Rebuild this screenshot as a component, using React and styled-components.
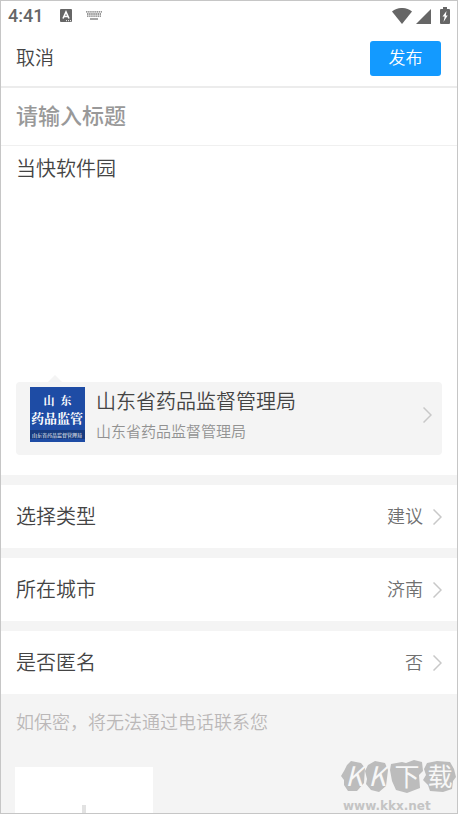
import React, { useState } from "react";
import styled, { createGlobalStyle } from "styled-components";

const GlobalStyle = createGlobalStyle`
  * {
    box-sizing: border-box;
  }
  body {
    margin: 0;
    background-color: #fff;
    font-family: Roboto, "Noto Sans CJK SC", sans-serif;
    font-weight: 350;
    color: #444;
  }
  button, input, textarea {
    font-family: inherit;
    font-weight: inherit;
    color: inherit;
    border: 0;
    outline: 0;
    padding: 0;
    background: none;
  }
`;

const Page = styled.div`
  position: relative;
  display: flex;
  flex-direction: column;
  height: 100vh;
  overflow: hidden;
  border: 1px solid #c6c6c6;
`;

const StatusBar = styled.div`
  display: flex;
  flex-shrink: 0;
  align-items: center;
  height: 29px;
  padding: 0 7px;
  color: #666;
`;

const Clock = styled.span`
  width: 52px;
  font-size: 18px;
  font-weight: 500;
  line-height: 29px;
`;

const StatusIcons = styled.div`
  display: flex;
  align-items: center;
  gap: ${(props) => props.gap};
  margin-left: ${(props) => (props.end ? "auto" : "0")};
`;

const Toolbar = styled.header`
  display: flex;
  flex-shrink: 0;
  align-items: center;
  justify-content: space-between;
  height: 58px;
  padding: 0 16px 0 15px;
  border-bottom: 2px solid #ececec;
`;

const CancelButton = styled.button`
  padding-top: 2px;
  font-size: 19px;
  line-height: 28px;
  cursor: pointer;
`;

const PublishButton = styled.button`
  width: 71px;
  height: 35px;
  border-radius: 3px;
  background-color: #139aff;
  color: #fff;
  font-size: 17px;
  line-height: 24px;
  cursor: pointer;
`;

const TitleInput = styled.input`
  flex-shrink: 0;
  height: 58px;
  padding: 0 15px;
  border-bottom: 1px solid #f0f0f0;
  font-size: 22px;
  font-weight: 500;

  &::placeholder {
    color: #999;
    opacity: 1;
  }
`;

const BodyInput = styled.textarea`
  flex-shrink: 0;
  height: 236px;
  padding: 8px 15px;
  resize: none;
  font-size: 20px;
  line-height: 30px;
`;

const AgencyCard = styled.button`
  position: relative;
  display: flex;
  flex-shrink: 0;
  align-items: center;
  height: 73px;
  margin: 0 15px 20px;
  padding: 0 10px 8px 14px;
  border-radius: 4px;
  background-color: #f4f4f4;
  text-align: left;
  cursor: pointer;

  &::before {
    content: "";
    position: absolute;
    top: -7px;
    left: 32px;
    border: 7px solid transparent;
    border-top-width: 0;
    border-bottom-color: #f4f4f4;
  }
`;

const AgencyText = styled.div`
  display: flex;
  flex: 1;
  flex-direction: column;
  gap: 4px;
  padding-left: 11px;
`;

const AgencyName = styled.span`
  font-size: 20px;
  line-height: 30px;
`;

const AgencyDetail = styled.span`
  color: #929292;
  font-size: 15px;
  line-height: 22px;
`;

const Options = styled.div`
  display: flex;
  flex-shrink: 0;
  flex-direction: column;
  gap: 10px;
  padding-top: 10px;
  background-color: #f4f4f4;
`;

const OptionRow = styled.button`
  display: flex;
  align-items: center;
  height: 63px;
  padding: 0 15px;
  background-color: #fff;
  cursor: pointer;
`;

const OptionLabel = styled.span`
  flex: 1;
  font-size: 20px;
  line-height: 30px;
  text-align: left;
`;

const OptionValue = styled.span`
  margin-right: 10px;
  color: #707070;
  font-size: 18px;
  line-height: 28px;
`;

const Footer = styled.div`
  flex: 1 0 auto;
  padding: 15px 14px;
  background-color: #f4f4f4;
`;

const Hint = styled.p`
  margin: 0 0 30px;
  padding-left: 1px;
  color: #bbb8b8;
  font-size: 18px;
  line-height: 28px;
`;

const UploadButton = styled.button`
  display: flex;
  align-items: center;
  justify-content: center;
  width: 138px;
  height: 138px;
  background-color: #fff;
  cursor: pointer;
`;

const Watermark = styled.div`
  position: absolute;
  right: 0;
  bottom: 0;
  pointer-events: none;

  svg {
    display: block;
  }
`;

const Chevron = () => (
  <svg width="9" height="16" viewBox="0 0 9 16" fill="none">
    <path d="M0.5 0.5L8 8L0.5 15.5" stroke="#c8c8c8" strokeWidth="1.5" />
  </svg>
);

const AgencyLogo = () => (
  <svg width="55" height="55" viewBox="0 0 55 55">
    <rect width="55" height="55" fill="#1e4ca5" />
    <rect y="43" width="55" height="9" fill="#173b80" />
    <g
      fill="#fff"
      fontFamily='"Noto Serif CJK SC", "Noto Sans CJK SC", serif'
      fontWeight="bold"
      textAnchor="middle"
    >
      <text x="19" y="18" fontSize="11">山</text>
      <text x="36" y="18" fontSize="11">东</text>
      <text x="27" y="36" fontSize="13">药品监管</text>
      <text x="27" y="50" fontSize="5" fill="#c5cfdf">
        山东省药品监督管理局
      </text>
    </g>
  </svg>
);

const LetterIcon = () => (
  <svg width="12" height="13" viewBox="0 0 12 13">
    <rect width="12" height="13" rx="1" fill="#666" />
    <path d="M3 9.5L6 3L9 9.5M4 7.5H8" stroke="#fff" strokeWidth="1.6" fill="none" />
    <path d="M6 11.7H11" stroke="#fff" strokeWidth="1" strokeDasharray="1 1" />
  </svg>
);

const KeyboardIcon = () => (
  <svg width="16" height="9" viewBox="0 0 16 9" stroke="#777" fill="none">
    <path d="M0 0.8H16M1 3H15M1 5.2H15" strokeWidth="1.3" strokeDasharray="1.5 0.6" />
    <path d="M4 8H12" strokeWidth="1.3" />
  </svg>
);

const WifiIcon = () => (
  <svg width="20" height="16" viewBox="0 0 20 16">
    <path d="M0 3.5C6 -1.2 14 -1.2 20 3.5L10 16Z" fill="#666" />
  </svg>
);

const SignalIcon = () => (
  <svg width="15" height="16" viewBox="0 0 15 16">
    <path d="M15 1V16H0Z" fill="#666" />
  </svg>
);

const BatteryIcon = () => (
  <svg width="10" height="17" viewBox="0 0 10 17">
    <path
      d="M3 0H7V2H9Q10 2 10 3V16Q10 17 9 17H1Q0 17 0 16V3Q0 2 1 2H3Z"
      fill="#666"
    />
    <path d="M6.5 4L2.5 9.5H4.7L3.5 15L7.7 8.5H5.8Z" fill="#fff" />
  </svg>
);

const BrandMark = () => (
  <svg width="116" height="62" viewBox="0 0 116 62">
    <g fill="#bcbcbc">
      <path d="M6 14L10 10L20 12L24 17L23 32L16 40L7 40L3 34L3 29L0 25L3 20Z" />
      <path d="M27 14L34 10L44 12L47 19L45 35L38 41L30 39L25 33L26 28L24 20Z" />
      <path d="M50 13L61 11L65 12L73 9L81 11L82 20L78 24L79 37L66 42L55 39L51 30L49 19Z" />
      <path d="M86 12L96 10L109 11L113 18L115 26L112 30L111 38L102 41L89 40L87 34L82 29L85 24L83 18Z" />
    </g>
    <g
      fill="#f7f7f7"
      fontFamily='"Noto Sans CJK SC", sans-serif'
      fontWeight="400"
      textAnchor="middle"
    >
      <text x="13" y="35" fontSize="27" fontStyle="italic">K</text>
      <text x="36" y="35" fontSize="27" fontStyle="italic">K</text>
      <text x="66" y="35" fontSize="25">下</text>
      <text x="99" y="35" fontSize="25">载</text>
    </g>
    <text
      x="2"
      y="59"
      fill="#c4c4c4"
      fontFamily='"DejaVu Sans", sans-serif'
      fontWeight="bold"
      fontSize="12"
    >
      www.kkx.net
    </text>
  </svg>
);

const options = [
  { label: "选择类型", value: "建议" },
  { label: "所在城市", value: "济南" },
  { label: "是否匿名", value: "否" },
];

export default function App() {
  const [title, setTitle] = useState("");
  const [content, setContent] = useState("当快软件园");

  return (
    <Page lang="zh-CN">
      <GlobalStyle />
      <StatusBar>
        <Clock>4:41</Clock>
        <StatusIcons gap="14px">
          <LetterIcon />
          <KeyboardIcon />
        </StatusIcons>
        <StatusIcons gap="9px" end>
          <StatusIcons gap="4px">
            <WifiIcon />
            <SignalIcon />
          </StatusIcons>
          <BatteryIcon />
        </StatusIcons>
      </StatusBar>
      <Toolbar>
        <CancelButton type="button">取消</CancelButton>
        <PublishButton type="button">发布</PublishButton>
      </Toolbar>
      <TitleInput
        aria-label="标题"
        placeholder="请输入标题"
        value={title}
        onChange={(e) => setTitle(e.target.value)}
      />
      <BodyInput
        aria-label="内容"
        value={content}
        onChange={(e) => setContent(e.target.value)}
      />
      <AgencyCard type="button">
        <AgencyLogo />
        <AgencyText>
          <AgencyName>山东省药品监督管理局</AgencyName>
          <AgencyDetail>山东省药品监督管理局</AgencyDetail>
        </AgencyText>
        <Chevron />
      </AgencyCard>
      <Options>
        {options.map((option) => (
          <OptionRow type="button" key={option.label}>
            <OptionLabel>{option.label}</OptionLabel>
            <OptionValue>{option.value}</OptionValue>
            <Chevron />
          </OptionRow>
        ))}
      </Options>
      <Footer>
        <Hint>如保密，将无法通过电话联系您</Hint>
        <UploadButton type="button" aria-label="添加图片">
          <svg width="62" height="62" viewBox="0 0 62 62">
            <path d="M31 0V62M0 31H62" stroke="#e2e2e2" strokeWidth="4" />
          </svg>
        </UploadButton>
      </Footer>
      <Watermark>
        <BrandMark />
      </Watermark>
    </Page>
  );
}
